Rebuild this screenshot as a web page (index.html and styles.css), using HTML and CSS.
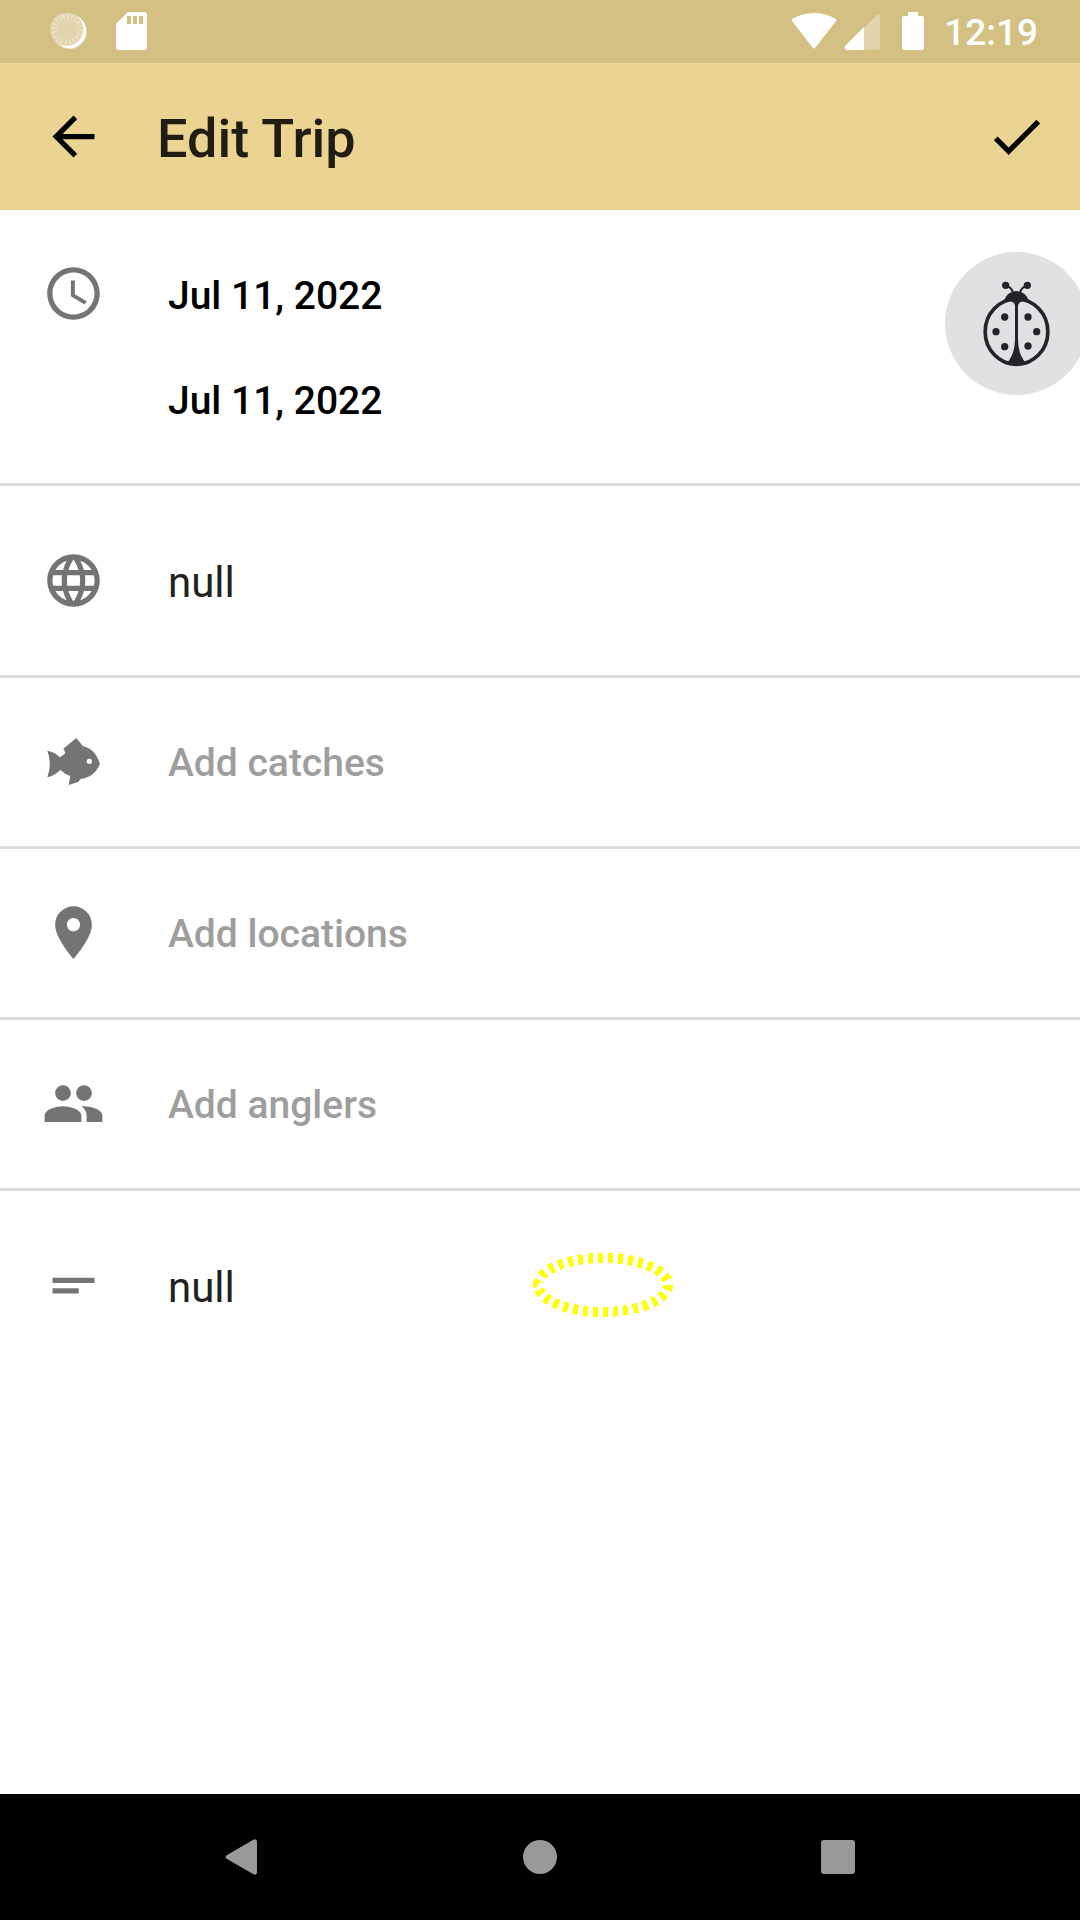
FILE: index.html
```html
<!DOCTYPE html>
<html lang="en">
<head>
<meta charset="utf-8">
<meta name="viewport" content="width=device-width, initial-scale=1">
<title>Edit Trip</title>
<link rel="stylesheet" href="styles.css">
</head>
<body>
<div class="screen">
  <div class="status-bar">
    <div class="status-group status-left">
      <svg width="38" height="38" viewBox="0 0 114 114" aria-hidden="true">
        <circle cx="60" cy="60" r="51" fill="#fff" opacity=".5"/>
        <circle cx="57" cy="57" r="51" fill="#fff"/>
        <circle cx="50" cy="52" r="50" fill="#e2d5ae"/>
        <circle cx="50" cy="52" r="39" fill="none" stroke="#ebe2c8" stroke-width="16" stroke-dasharray="5 7.25"/>
      </svg>
      <svg width="32" height="38" viewBox="0 0 32 38" aria-hidden="true">
        <path fill="#fff" fill-rule="evenodd" d="M12 0H28Q31 0 31 3V35Q31 38 28 38H3Q0 38 0 35V12ZM11 4V12H15V4ZM17 4V12H21V4ZM23 4V12H27V4Z"/>
      </svg>
    </div>
    <div class="status-group status-right">
      <svg width="46" height="38" viewBox="0 0 46 38" aria-hidden="true">
        <path fill="#fff" d="M1 9Q0 8 1 7Q11 1 23 1T45 7Q46 8 45 9L24 36Q23 37 22 36Z"/>
      </svg>
      <svg class="signal" width="36" height="38" viewBox="0 0 36 38" aria-hidden="true">
        <path fill="#fff" opacity=".3" d="M20 16L33 3Q36 2 36 5V35Q36 38 34 38H20Z"/>
        <path fill="#fff" d="M20 15V38H2Q0 37 1 34Z"/>
      </svg>
      <svg class="battery" width="22" height="38" viewBox="0 0 22 38" aria-hidden="true">
        <path fill="#fff" d="M6 0H16V4H20Q22 4 22 6V36Q22 38 20 38H2Q0 38 0 36V6Q0 4 2 4H6Z"/>
      </svg>
      <span class="time">12:19</span>
    </div>
  </div>

  <header class="app-bar">
    <button class="icon-button" type="button" aria-label="Back">
      <svg class="icon" viewBox="0 0 24 24"><path d="M20 11H7.83l5.59-5.59L12 4l-8 8 8 8 1.41-1.41L7.83 13H20v-2z"/></svg>
    </button>
    <h1 class="title">Edit Trip</h1>
    <button class="icon-button" type="button" aria-label="Save">
      <svg class="icon" viewBox="0 0 24 24"><path d="M9 16.2L4.8 12l-1.4 1.4L9 19 21 7l-1.4-1.4L9 16.2z"/></svg>
    </button>
  </header>

  <main class="form">
    <section class="row row-dates">
      <svg class="icon row-icon" viewBox="0 0 24 24" aria-hidden="true"><path d="M11.99 2C6.47 2 2 6.48 2 12s4.47 10 9.99 10C17.52 22 22 17.52 22 12S17.52 2 11.99 2zM12 20c-4.42 0-8-3.58-8-8s3.58-8 8-8 8 3.58 8 8-3.58 8-8 8zM12.5 7H11v6l5.25 3.15.75-1.23-4.5-2.67z"/></svg>
      <div class="dates">
        <button class="field-button date" type="button">Jul 11, 2022</button>
        <button class="field-button date" type="button">Jul 11, 2022</button>
      </div>
    </section>

    <div class="row row-text">
      <label class="row-label" for="trip-name" aria-label="Trip name">
        <svg class="icon row-icon" viewBox="0 0 24 24" aria-hidden="true"><path d="M11.99 2C6.47 2 2 6.48 2 12s4.47 10 9.99 10C17.52 22 22 17.52 22 12S17.52 2 11.99 2zm6.93 6h-2.95c-.32-1.25-.78-2.45-1.38-3.56 1.84.63 3.37 1.91 4.33 3.56zM12 4.04c.83 1.2 1.48 2.53 1.91 3.96h-3.82c.43-1.43 1.08-2.76 1.91-3.96zM4.26 14C4.1 13.36 4 12.69 4 12s.1-1.36.26-2h3.38c-.08.66-.14 1.32-.14 2s.06 1.34.14 2H4.26zm.82 2h2.95c.32 1.25.78 2.45 1.38 3.56-1.84-.63-3.37-1.9-4.33-3.56zm2.95-8H5.08c.96-1.66 2.49-2.93 4.33-3.56C8.81 5.55 8.35 6.75 8.03 8zM12 19.96c-.83-1.2-1.48-2.53-1.91-3.96h3.82c-.43 1.43-1.08 2.76-1.91 3.96zM14.34 14H9.66c-.09-.66-.16-1.32-.16-2s.07-1.35.16-2h4.68c.09.65.16 1.32.16 2s-.07 1.34-.16 2zm.25 5.56c.6-1.11 1.06-2.31 1.38-3.56h2.95c-.96 1.65-2.49 2.93-4.33 3.56zM16.36 14c.08-.66.14-1.32.14-2s-.06-1.34-.14-2h3.38c.16.64.26 1.31.26 2s-.1 1.36-.26 2h-3.38z"/></svg>
      </label>
      <input class="text-input" id="trip-name" type="text" value="null">
    </div>

    <div class="row">
      <svg class="icon row-icon" viewBox="126 630 189 189" aria-hidden="true"><path fill-rule="evenodd" d="M142 692Q164 696 180 712L195 701Q196 694 190 686L229 654L249 679Q285 686 300 732Q282 773 241 777L236 785L206 795L211 768Q194 762 181 750Q164 767 142 772Q157 731 142 692ZM268 716A8 8 0 1 0 268 732A8 8 0 1 0 268 716Z"/></svg>
      <button class="field-button" type="button">Add catches</button>
    </div>

    <div class="row">
      <svg class="icon row-icon" viewBox="0 0 24 24" aria-hidden="true"><path d="M12 2C8.13 2 5 5.13 5 9c0 5.25 7 13 7 13s7-7.75 7-13c0-3.87-3.13-7-7-7zm0 9.500c-1.380 0-2.500-1.120-2.500-2.500s1.120-2.500 2.500-2.500 2.500 1.120 2.500 2.500-1.120 2.500-2.500 2.500z"/></svg>
      <button class="field-button" type="button">Add locations</button>
    </div>

    <div class="row">
      <svg class="icon row-icon" viewBox="0 0 24 24" aria-hidden="true"><circle cx="8" cy="8" r="3"/><circle cx="16" cy="8" r="3"/><path d="M8 13c-2.330 0-7 1.170-7 3.500V19h14v-2.500c0-2.330-4.670-3.500-7-3.500zm8 0c-.29 0-.62.020-.970.050 1.160.840 1.970 1.970 1.970 3.450V19h6v-2.500c0-2.330-4.670-3.500-7-3.500z"/></svg>
      <button class="field-button" type="button">Add anglers</button>
    </div>

    <div class="row row-text row-notes">
      <label class="row-label" for="trip-notes" aria-label="Notes">
        <svg class="icon row-icon" viewBox="0 0 24 24" aria-hidden="true"><path d="M4 9h16v2H4zM4 13h10v2H4z"/></svg>
      </label>
      <input class="text-input" id="trip-notes" type="text" value="null">
      <svg class="marker" width="140" height="64" viewBox="0 0 140 64" shape-rendering="crispEdges" aria-hidden="true">
        <ellipse cx="70" cy="32" rx="65" ry="27" fill="none" stroke="#ff0" stroke-width="10" stroke-dasharray="5 5" pathLength="300"/>
      </svg>
    </div>
  </main>

  <button class="debug-button" type="button" aria-label="Report a bug">
    <svg width="143" height="143" viewBox="75 66 429 429">
      <circle cx="289.500" cy="280.500" r="214.500" fill="#e0e1e3"/>
      <g fill="#232428">
        <path d="M250 216Q262 183 289 183T329 216Q289 206 250 216Z"/>
        <path d="M285 214H294V330Q295 368 312 394Q302 408 289 408T266 394Q284 368 285 330Z"/>
        <path d="M262 214Q282 213 285 226H294Q297 213 318 214L300 201H278Z"/>
        <path d="M256 398Q270 395 273 380H306Q309 395 323 398Q289 415 256 398Z"/>
        <circle cx="257" cy="166" r="11"/><circle cx="322" cy="166" r="11"/>
        <circle cx="254" cy="261" r="11"/><circle cx="324" cy="261" r="11"/>
        <circle cx="228" cy="305" r="11"/><circle cx="350" cy="305" r="11"/>
        <circle cx="254" cy="350" r="11"/><circle cx="324" cy="348" r="11"/>
      </g>
      <g fill="none" stroke="#232428">
        <ellipse cx="289.500" cy="305" rx="94" ry="98" stroke-width="11"/>
        <path d="M259 168Q275 172 279 188M320 168Q304 172 300 188" stroke-width="6"/>
      </g>
    </svg>
  </button>

  <nav class="nav-bar" aria-label="System">
    <button class="nav-button" type="button" aria-label="Back">
      <svg width="36" height="36" viewBox="0 0 36 36"><path d="M3 16L29 1Q33 -1 33 3V33Q33 37 29 35L3 20Q0 18 3 16Z"/></svg>
    </button>
    <button class="nav-button" type="button" aria-label="Home">
      <svg width="36" height="36" viewBox="0 0 36 36"><circle cx="18" cy="18" r="17"/></svg>
    </button>
    <button class="nav-button" type="button" aria-label="Recent apps">
      <svg width="36" height="36" viewBox="0 0 36 36"><rect x="1" y="1" width="34" height="34" rx="3"/></svg>
    </button>
  </nav>
</div>
</body>
</html>
```
FILE: styles.css
```css
* {
  box-sizing: border-box;
}

body {
  margin: 0;
  background: #fff;
  color: #000;
  font-family: Roboto, "Noto Sans", sans-serif;
}

button {
  padding: 0;
  border: 0;
  background: none;
  color: inherit;
  font: inherit;
  cursor: pointer;
}

svg {
  display: block;
  flex: none;
}

.screen {
  position: relative;
  display: flex;
  flex-direction: column;
  min-height: 100vh;
  overflow: hidden;
}

/* Status bar */
.status-bar {
  display: flex;
  justify-content: space-between;
  height: 63px;
  padding: 12px 42px 13px 50px;
  background: #d5c084;
  color: #fff;
}

.status-group {
  display: flex;
  align-items: center;
}

.status-left {
  gap: 28px;
}

.signal {
  margin-left: 7px;
}

.battery {
  margin: 0 20px 0 22px;
}

.time {
  padding-top: 4px;
  font-size: 37px;
  font-weight: 500;
  line-height: 38px;
}

/* App bar */
.app-bar {
  display: flex;
  align-items: center;
  height: 147px;
  padding: 0 32px 0 42px;
  background: #ebd392;
}

.title {
  flex: 1;
  margin: 0;
  padding: 4px 0 0 52px;
  color: #211d14;
  font-size: 54px;
  font-weight: 500;
  line-height: 62px;
}

.icon {
  width: 63px;
  height: 63px;
  fill: currentColor;
}

/* Form rows */
.form {
  flex: 1;
}

.row {
  position: relative;
  display: flex;
  align-items: center;
  gap: 63px;
  min-height: 171px;
  padding: 0 42px 2px;
  border-bottom: 3px solid #dcdcdc;
}

.row-icon {
  color: #747474;
}

.row-dates {
  align-items: flex-start;
  padding-top: 31px;
  padding-bottom: 32px;
}

.row-dates .row-icon {
  margin-top: 21px;
}

.dates {
  display: flex;
  flex: 1;
  flex-direction: column;
}

.row-text {
  min-height: 192px;
  padding-bottom: 0;
}

.row-notes {
  border-bottom-color: transparent;
}

.field-button {
  flex: 1;
  min-height: 105px;
  padding-top: 4px;
  color: #9e9e9e;
  font-size: 39px;
  font-weight: 500;
  text-align: left;
}

.date {
  color: #000;
}

.text-input {
  flex: 1;
  min-width: 0;
  height: 105px;
  padding: 4px 0 0;
  border: 0;
  outline: 0;
  background: none;
  color: #212121;
  font: 400 42px Roboto, "Noto Sans", sans-serif;
}

.marker {
  position: absolute;
  top: 62px;
  left: 533px;
}

/* Floating debug button, partly past the screen edge */
.debug-button {
  position: absolute;
  top: 252px;
  right: -8px;
}

/* System navigation */
.nav-bar {
  display: flex;
  justify-content: center;
  height: 126px;
  background: #000;
}

.nav-button {
  display: flex;
  flex: 0 1 298px;
  align-items: center;
  justify-content: center;
  fill: #999;
}
```
